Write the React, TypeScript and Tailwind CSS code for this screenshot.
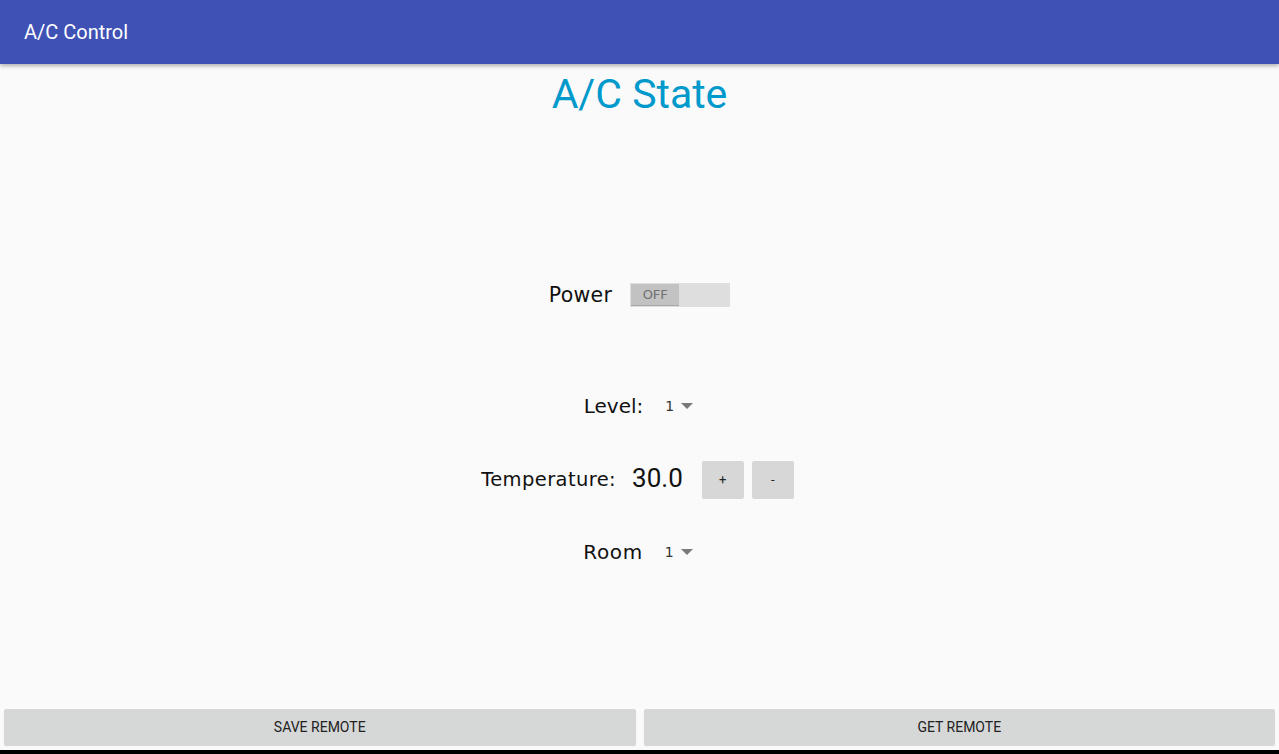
import React from "react";

function Spinner({ value }: { value: string }) {
  return (
    <div className="flex items-center ml-[22px]">
      <span className="text-[14px] text-[#333] font-['DejaVu_Sans',sans-serif]">{value}</span>
      <svg width="12" height="7" viewBox="0 0 12 7" className="ml-[7px] mt-[1px]">
        <polygon points="0,0 12,0 6,6" fill="#7a7a7a" />
      </svg>
    </div>
  );
}

export default function App() {
  return (
    <div className="h-[754px] w-full flex flex-col bg-[#fafafa] overflow-hidden">
      <header className="h-[64px] shrink-0 bg-[#3f51b5] flex items-center px-6 shadow-[0_2px_4px_rgba(0,0,0,0.3)] relative z-10">
        <span className="text-white text-[20px] font-['Roboto',sans-serif]">A/C Control</span>
      </header>
      <main className="flex-1 flex flex-col">
        <div className="h-[60px] flex items-center justify-center">
          <h1 className="text-[41px] leading-none text-[#0099cc] font-['Roboto',sans-serif]">A/C State</h1>
        </div>
        <div className="mt-[159px] h-6 flex items-center justify-center">
          <span className="text-[20.5px] tracking-[0.3px] text-[#111] font-['DejaVu_Sans',sans-serif]">Power</span>
          <div className="ml-[18px] w-[100px] h-6 bg-[#dedede] p-[1px] flex">
            <div className="w-[48px] h-[22px] bg-[#c2c2c2] border-b border-[#a8a8a8] flex items-center justify-center">
              <span className="text-[13px] text-[#707070] font-['DejaVu_Sans',sans-serif]">OFF</span>
            </div>
          </div>
        </div>
        <div className="mt-[87px] h-6 flex items-center justify-center pr-[2px]">
          <span className="text-[20px] text-[#111] font-['DejaVu_Sans',sans-serif]">Level:</span>
          <Spinner value="1" />
        </div>
        <div className="mt-[43px] h-[38px] flex items-center justify-center pr-[4px]">
          <span className="text-[19.5px] tracking-[0.4px] text-[#111] font-['DejaVu_Sans',sans-serif]">Temperature:</span>
          <span className="ml-[16px] text-[26px] text-[#111] font-['Roboto',sans-serif] -mt-[4px]">30.0</span>
          <button className="ml-[19px] w-[42px] h-[38px] bg-[#d7d7d7] rounded-[2px] text-[13px] text-[#222] font-['Roboto',sans-serif]">+</button>
          <button className="ml-[8px] w-[42px] h-[38px] bg-[#d7d7d7] rounded-[2px] text-[13px] text-[#222] font-['Roboto',sans-serif]">-</button>
        </div>
        <div className="mt-[41px] h-6 flex items-center justify-center pr-[3px]">
          <span className="text-[20px] tracking-[0.6px] text-[#111] font-['DejaVu_Sans',sans-serif]">Room</span>
          <Spinner value="1" />
        </div>
      </main>
      <div className="h-9 flex gap-2 px-1 shrink-0">
        <button className="flex-1 bg-[#d6d7d7] rounded-[2px] text-[14px] text-[#222] font-['Roboto',sans-serif] shadow-[0_1px_1px_rgba(0,0,0,0.15)]">SAVE REMOTE</button>
        <button className="flex-1 bg-[#d6d7d7] rounded-[2px] text-[14px] text-[#222] font-['Roboto',sans-serif] shadow-[0_1px_1px_rgba(0,0,0,0.15)]">GET REMOTE</button>
      </div>
      <div className="h-[5px] shrink-0" />
      <div className="h-1 bg-black shrink-0" />
    </div>
  );
}
